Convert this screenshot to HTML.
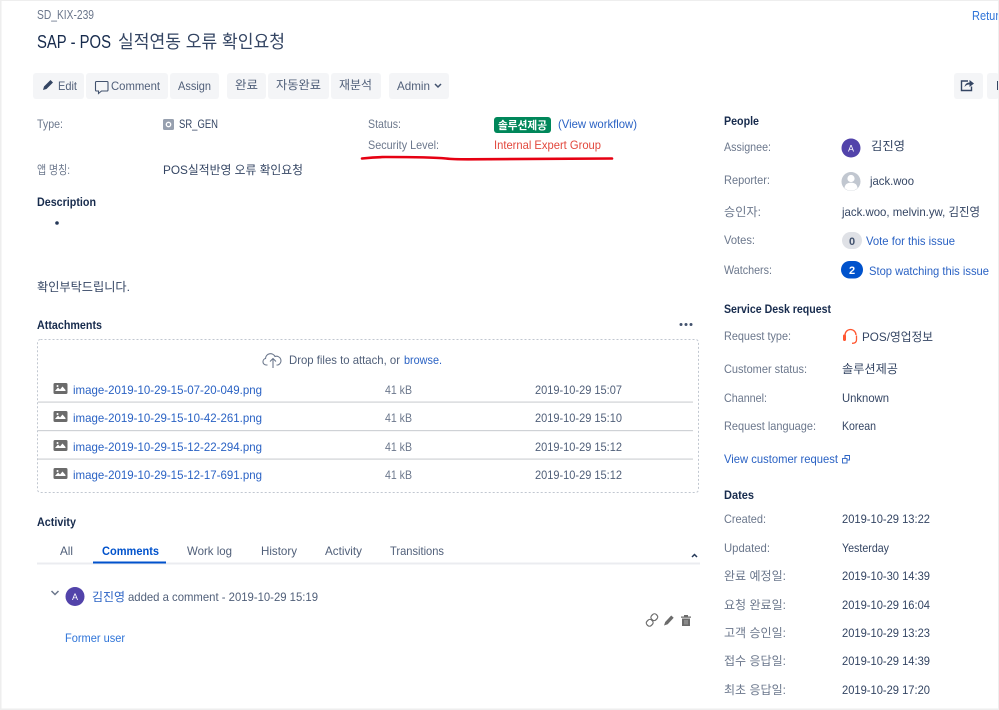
<!DOCTYPE html>
<html lang="ko"><head><meta charset="utf-8"><title>SD_KIX-239</title>
<style>
html,body{margin:0;padding:0;background:#fff;width:999px;height:710px;overflow:hidden}
svg{display:block;filter:blur(.3px)}
text{font-family:"Liberation Sans","Noto Sans CJK KR",sans-serif;font-size:12px;fill:#42526e;white-space:pre}
.l{fill:#6b778c}.v{fill:#344563}.a{fill:#0052cc}.b{font-weight:700;fill:#172b4d}.t{fill:#505f79}
.btn{fill:#f4f5f7}
</style></head><body>
<svg width="999" height="710" viewBox="0 0 999 710" xmlns="http://www.w3.org/2000/svg">
<rect width="999" height="710" fill="#fff"/>
<rect x="0" y="0" width="999" height="1" fill="#eee"/><rect x="0" y="0" width="1.500" height="710" fill="#eee"/><rect x="0" y="708.500" width="999" height="1.500" fill="#eee"/>

<text x="37" y="19" class="l" style="font-size:12.500px" textLength="57" lengthAdjust="spacingAndGlyphs">SD_KIX-239</text>
<text x="37" y="48" style="font-size:18px;fill:#172b4d" textLength="74" lengthAdjust="spacingAndGlyphs">SAP - POS</text>
<text x="118" y="48" style="font-size:18px;fill:#344563" textLength="167" lengthAdjust="spacingAndGlyphs">실적연동 오류 확인요청</text>
<text x="972" y="20" style="font-size:12.500px;fill:#2f74d8" textLength="27" lengthAdjust="spacingAndGlyphs">Retur</text>

<g class="btn">
<rect x="33" y="73" width="51" height="26" rx="3"/><rect x="86" y="73" width="82" height="26" rx="3"/><rect x="170" y="73" width="49" height="26" rx="3"/>
<rect x="227" y="73" width="39" height="26" rx="3"/><rect x="268" y="73" width="61" height="26" rx="3"/><rect x="331" y="73" width="50" height="26" rx="3"/>
<rect x="389" y="73" width="60" height="26" rx="3"/><rect x="954" y="73" width="29" height="26" rx="3"/><rect x="987" y="73" width="12" height="26" rx="3"/>
</g>
<path d="M43 90l1-3.500 6.500-6.500 2.500 2.500-6.500 6.500z" fill="#344563"/>
<text x="58" y="90" class="t" textLength="19" lengthAdjust="spacingAndGlyphs">Edit</text>
<path d="M96.500 81.500h10.500a1 1 0 0 1 1 1v7.500a1 1 0 0 1-1 1h-5.500l-3 2.500v-2.500h-2a1 1 0 0 1-1-1v-7.500a1 1 0 0 1 1-1z" fill="none" stroke="#42526e" stroke-width="1.100"/>
<text x="111" y="90" class="t" textLength="49" lengthAdjust="spacingAndGlyphs">Comment</text>
<text x="178" y="90" class="t" textLength="33" lengthAdjust="spacingAndGlyphs">Assign</text>
<text x="235" y="89" class="t" textLength="23" lengthAdjust="spacingAndGlyphs">완료</text>
<text x="276" y="89" class="t" textLength="45" lengthAdjust="spacingAndGlyphs">자동완료</text>
<text x="339" y="89" class="t" textLength="33" lengthAdjust="spacingAndGlyphs">재분석</text>
<text x="397" y="90" class="t" textLength="33" lengthAdjust="spacingAndGlyphs">Admin</text>
<path d="M435 84l3 3 3-3" fill="none" stroke="#42526e" stroke-width="1.500"/>
<path d="M968 81h-6.500v9.500h10v-4" fill="none" stroke="#344563" stroke-width="1.400"/><path d="M964.500 87c.5-3 2.500-4.500 5-4.500v-2.500l4.500 3.500-4.500 3.500v-2.500c-2 0-3.500.5-5 2.500z" fill="#344563"/>
<rect x="997" y="81" width="2" height="9" fill="#344563"/>

<text x="37" y="128" class="l" textLength="26" lengthAdjust="spacingAndGlyphs">Type:</text>
<rect x="163" y="119" width="11" height="11" rx="1.500" fill="#97a0af"/><circle cx="168.500" cy="124.500" r="2.200" fill="none" stroke="#fff" stroke-width="1.300"/>
<text x="179" y="128" class="v" textLength="39" lengthAdjust="spacingAndGlyphs">SR_GEN</text>
<text x="368" y="128" class="l" textLength="33" lengthAdjust="spacingAndGlyphs">Status:</text>
<text x="368" y="149" class="l" textLength="71" lengthAdjust="spacingAndGlyphs">Security Level:</text>
<rect x="494" y="117" width="57" height="16" rx="3" fill="#00875a"/>
<text x="498" y="129" style="font-size:11px;font-weight:700;fill:#fff" textLength="49" lengthAdjust="spacingAndGlyphs">솔루션제공</text>
<text x="558" y="128" style="fill:#2a62c4" textLength="79" lengthAdjust="spacingAndGlyphs">(View workflow)</text>
<text x="494" y="149" style="fill:#e2483d" textLength="107" lengthAdjust="spacingAndGlyphs">Internal Expert Group</text>
<path d="M362 158.500c8-1 14-1.500 24-1.500 22 0 45 0 60 1.500 6 .7 12 .8 22 .8 50 0 100-.6 144-.8" fill="none" stroke="#e60012" stroke-width="2.600" stroke-linecap="round"/>

<text x="37" y="174" class="l" textLength="33" lengthAdjust="spacingAndGlyphs">앱 명칭:</text>
<text x="163" y="174" class="v" textLength="140" lengthAdjust="spacingAndGlyphs">POS실적반영 오류 확인요청</text>
<text x="37" y="206" class="b" textLength="59" lengthAdjust="spacingAndGlyphs">Description</text>
<circle cx="57" cy="223" r="1.800" fill="#253858"/>
<text x="37" y="291" class="v" textLength="93" lengthAdjust="spacingAndGlyphs">확인부탁드립니다.</text>

<text x="37" y="329" class="b" textLength="65" lengthAdjust="spacingAndGlyphs">Attachments</text>
<g fill="#42526e"><circle cx="681" cy="324.500" r="1.500"/><circle cx="686" cy="324.500" r="1.500"/><circle cx="691" cy="324.500" r="1.500"/></g>
<rect x="37.500" y="339.500" width="661" height="153" rx="3" fill="none" stroke="#c1c7d0" stroke-dasharray="2 2"/>
<path d="M267.500 365h-1.500a3.300 3.300 0 0 1-.5-6.500 5 5 0 0 1 9.500-2 4.200 4.200 0 0 1 3 8.500h-1.500" fill="none" stroke="#6b778c" stroke-width="1.100"/>
<path d="M273 368v-9M270 361.500l3-3 3 3" fill="none" stroke="#6b778c" stroke-width="1.100"/>
<text x="289" y="364" class="t" textLength="111" lengthAdjust="spacingAndGlyphs">Drop files to attach, or</text>
<text x="404" y="364" style="fill:#2a62c4" textLength="38" lengthAdjust="spacingAndGlyphs">browse.</text>

<g id="r">
<path d="M55 383h11a1.500 1.500 0 0 1 1.500 1.500v8a1.500 1.500 0 0 1-1.500 1.500h-11a1.500 1.500 0 0 1-1.500-1.500v-8a1.500 1.500 0 0 1 1.500-1.500z" fill="#6b6b6b"/><path d="M55 391l3-3.500 2 2 2.500-3 3 3.500v1h-10.500z" fill="#fff"/><circle cx="57.500" cy="386" r="1" fill="#fff"/>
</g>
<use href="#r" y="28"/><use href="#r" y="57"/><use href="#r" y="85"/>
<text x="73" y="394" style="fill:#2a62c4" textLength="189" lengthAdjust="spacingAndGlyphs">image-2019-10-29-15-07-20-049.png</text>
<text x="73" y="422" style="fill:#2a62c4" textLength="189" lengthAdjust="spacingAndGlyphs">image-2019-10-29-15-10-42-261.png</text>
<text x="73" y="451" style="fill:#2a62c4" textLength="189" lengthAdjust="spacingAndGlyphs">image-2019-10-29-15-12-22-294.png</text>
<text x="73" y="479" style="fill:#2a62c4" textLength="189" lengthAdjust="spacingAndGlyphs">image-2019-10-29-15-12-17-691.png</text>
<text x="385" y="394" class="l" textLength="27" lengthAdjust="spacingAndGlyphs">41 kB</text>
<text x="385" y="422" class="l" textLength="27" lengthAdjust="spacingAndGlyphs">41 kB</text>
<text x="385" y="451" class="l" textLength="27" lengthAdjust="spacingAndGlyphs">41 kB</text>
<text x="385" y="479" class="l" textLength="27" lengthAdjust="spacingAndGlyphs">41 kB</text>
<text x="535" y="394" class="t" textLength="87" lengthAdjust="spacingAndGlyphs">2019-10-29 15:07</text>
<text x="535" y="422" class="t" textLength="87" lengthAdjust="spacingAndGlyphs">2019-10-29 15:10</text>
<text x="535" y="451" class="t" textLength="87" lengthAdjust="spacingAndGlyphs">2019-10-29 15:12</text>
<text x="535" y="479" class="t" textLength="87" lengthAdjust="spacingAndGlyphs">2019-10-29 15:12</text>
<g fill="#cfd2d6"><rect x="38" y="401.500" width="655" height="1.200"/><rect x="38" y="430" width="655" height="1.200"/><rect x="38" y="458.500" width="655" height="1.200"/></g>

<text x="37" y="526" class="b" textLength="39" lengthAdjust="spacingAndGlyphs">Activity</text>
<rect x="37" y="562.500" width="663" height="2" fill="#ebecf0"/>
<rect x="93" y="561.500" width="73" height="2" fill="#0052cc"/>
<text x="60" y="555" class="t" textLength="13" lengthAdjust="spacingAndGlyphs">All</text>
<text x="102" y="555" style="font-weight:700;fill:#0052cc" textLength="57" lengthAdjust="spacingAndGlyphs">Comments</text>
<text x="187" y="555" class="t" textLength="45" lengthAdjust="spacingAndGlyphs">Work log</text>
<text x="261" y="555" class="t" textLength="36" lengthAdjust="spacingAndGlyphs">History</text>
<text x="325" y="555" class="t" textLength="37" lengthAdjust="spacingAndGlyphs">Activity</text>
<text x="390" y="555" class="t" textLength="54" lengthAdjust="spacingAndGlyphs">Transitions</text>
<path d="M692 557l2.500-2.500 2.500 2.500" fill="none" stroke="#253858" stroke-width="1.500"/>
<path d="M51.500 591l3.500 3.500 3.500-3.500" fill="none" stroke="#6b778c" stroke-width="1.500"/>
<circle cx="75" cy="596.500" r="9.500" fill="#5243aa"/><text x="75" y="600" text-anchor="middle" style="font-size:9px;fill:#fff">A</text>
<text x="92" y="601" style="fill:#2a62c4" textLength="33" lengthAdjust="spacingAndGlyphs">김진영</text>
<text x="128" y="601" class="t" textLength="190" lengthAdjust="spacingAndGlyphs">added a comment - 2019-10-29 15:19</text>
<g fill="none" stroke="#6b6b6b" stroke-width="1.200">
<rect x="-3" y="-3.300" width="6" height="6.600" rx="2.600" transform="translate(649.700 622.800) rotate(45)"/>
<rect x="-3" y="-3.300" width="6" height="6.600" rx="2.600" transform="translate(654.300 617.200) rotate(45)"/>
</g>
<path d="M664 625.500l1.200-3.500 6-6.500 2.500 2.300-6 6.500z" fill="#6b6b6b"/>
<path d="M681 616.500h10v1.200h-10zM684 615h4v1.500h-4z" fill="#6b6b6b"/><path d="M682 618.500h8v7.500h-8z" fill="#6b6b6b"/><path d="M684 620v4.500h4V620z" fill="#8a8a8a"/>
<text x="65" y="642" style="fill:#2f74d8" textLength="60" lengthAdjust="spacingAndGlyphs">Former user</text>

<text x="724" y="125" class="b" textLength="35" lengthAdjust="spacingAndGlyphs">People</text>
<text x="724" y="151" class="l" textLength="47" lengthAdjust="spacingAndGlyphs">Assignee:</text>
<circle cx="851" cy="148" r="9.500" fill="#5243aa"/><text x="851" y="151.500" text-anchor="middle" style="font-size:9px;fill:#fff">A</text>
<text x="871" y="150" class="v" textLength="34" lengthAdjust="spacingAndGlyphs">김진영</text>
<text x="724" y="184" class="l" textLength="46" lengthAdjust="spacingAndGlyphs">Reporter:</text>
<circle cx="851" cy="181.500" r="9.500" fill="#c1c7d0"/><circle cx="851" cy="178.500" r="3.600" fill="#fff"/><path d="M844.500 188c.5-4 3-5.200 6.500-5.200s6 1.200 6.500 5.200a9 9 0 0 1-13 0z" fill="#fff"/>
<text x="870" y="185" class="v" textLength="44" lengthAdjust="spacingAndGlyphs">jack.woo</text>
<text x="724" y="216" class="l" textLength="37" lengthAdjust="spacingAndGlyphs">승인자:</text>
<text x="842" y="216" class="v" textLength="138" lengthAdjust="spacingAndGlyphs">jack.woo, melvin.yw, 김진영</text>
<text x="724" y="244" class="l" textLength="31" lengthAdjust="spacingAndGlyphs">Votes:</text>
<rect x="842" y="232" width="20" height="17" rx="8.500" fill="#dfe1e6"/><text x="852" y="245" text-anchor="middle" style="font-size:11px;font-weight:700;fill:#42526e">0</text>
<text x="866" y="245" style="fill:#2a62c4" textLength="89" lengthAdjust="spacingAndGlyphs">Vote for this issue</text>
<text x="724" y="274" class="l" textLength="48" lengthAdjust="spacingAndGlyphs">Watchers:</text>
<rect x="841" y="261" width="22" height="17.500" rx="8.700" fill="#0052cc"/><text x="852" y="274" text-anchor="middle" style="font-size:11px;font-weight:700;fill:#fff">2</text>
<text x="869" y="275" style="fill:#2a62c4" textLength="120" lengthAdjust="spacingAndGlyphs">Stop watching this issue</text>

<text x="724" y="313" class="b" textLength="107" lengthAdjust="spacingAndGlyphs">Service Desk request</text>
<text x="724" y="340" class="l" textLength="67" lengthAdjust="spacingAndGlyphs">Request type:</text>
<path d="M845 335a5.500 5.500 0 0 1 11 0" fill="none" stroke="#ff5630" stroke-width="1.300"/>
<rect x="843" y="334.500" width="3" height="6.500" rx="1.200" fill="#ff5630"/><path d="M856.500 335.500v4.500c0 2.500-2 3.300-4.500 3.300" fill="none" stroke="#ff5630" stroke-width="1.300"/>
<text x="862" y="341" class="v" textLength="71" lengthAdjust="spacingAndGlyphs">POS/영업정보</text>
<text x="724" y="373" class="l" textLength="83" lengthAdjust="spacingAndGlyphs">Customer status:</text>
<text x="842" y="373" class="v" textLength="56" lengthAdjust="spacingAndGlyphs">솔루션제공</text>
<text x="724" y="402" class="l" textLength="43" lengthAdjust="spacingAndGlyphs">Channel:</text>
<text x="842" y="402" class="v" textLength="47" lengthAdjust="spacingAndGlyphs">Unknown</text>
<text x="724" y="430" class="l" textLength="92" lengthAdjust="spacingAndGlyphs">Request language:</text>
<text x="842" y="430" class="v" textLength="34" lengthAdjust="spacingAndGlyphs">Korean</text>
<text x="724" y="463" style="fill:#2a62c4" textLength="114" lengthAdjust="spacingAndGlyphs">View customer request</text>
<g fill="none" stroke="#2a62c4" stroke-width=".9"><rect x="842.500" y="458.500" width="4.500" height="4.500"/><path d="M845 458v-2.500h4.500v4.500h-2"/></g>

<text x="724" y="499" class="b" textLength="30" lengthAdjust="spacingAndGlyphs">Dates</text>
<text x="724" y="523" class="l" textLength="42" lengthAdjust="spacingAndGlyphs">Created:</text>
<text x="842" y="523" class="v" textLength="88" lengthAdjust="spacingAndGlyphs">2019-10-29 13:22</text>
<text x="724" y="552" class="l" textLength="46" lengthAdjust="spacingAndGlyphs">Updated:</text>
<text x="842" y="552" class="v" textLength="47" lengthAdjust="spacingAndGlyphs">Yesterday</text>
<text x="724" y="580" class="l" textLength="62" lengthAdjust="spacingAndGlyphs">완료 예정일:</text>
<text x="842" y="580" class="v" textLength="88" lengthAdjust="spacingAndGlyphs">2019-10-30 14:39</text>
<text x="724" y="609" class="l" textLength="62" lengthAdjust="spacingAndGlyphs">요청 완료일:</text>
<text x="842" y="609" class="v" textLength="88" lengthAdjust="spacingAndGlyphs">2019-10-29 16:04</text>
<text x="724" y="637" class="l" textLength="62" lengthAdjust="spacingAndGlyphs">고객 승인일:</text>
<text x="842" y="637" class="v" textLength="88" lengthAdjust="spacingAndGlyphs">2019-10-29 13:23</text>
<text x="724" y="665" class="l" textLength="62" lengthAdjust="spacingAndGlyphs">접수 응답일:</text>
<text x="842" y="665" class="v" textLength="88" lengthAdjust="spacingAndGlyphs">2019-10-29 14:39</text>
<text x="724" y="694" class="l" textLength="62" lengthAdjust="spacingAndGlyphs">최초 응답일:</text>
<text x="842" y="694" class="v" textLength="88" lengthAdjust="spacingAndGlyphs">2019-10-29 17:20</text>
<rect x="998" y="0" width="1" height="710" fill="#eee"/>
</svg>
</body></html>
